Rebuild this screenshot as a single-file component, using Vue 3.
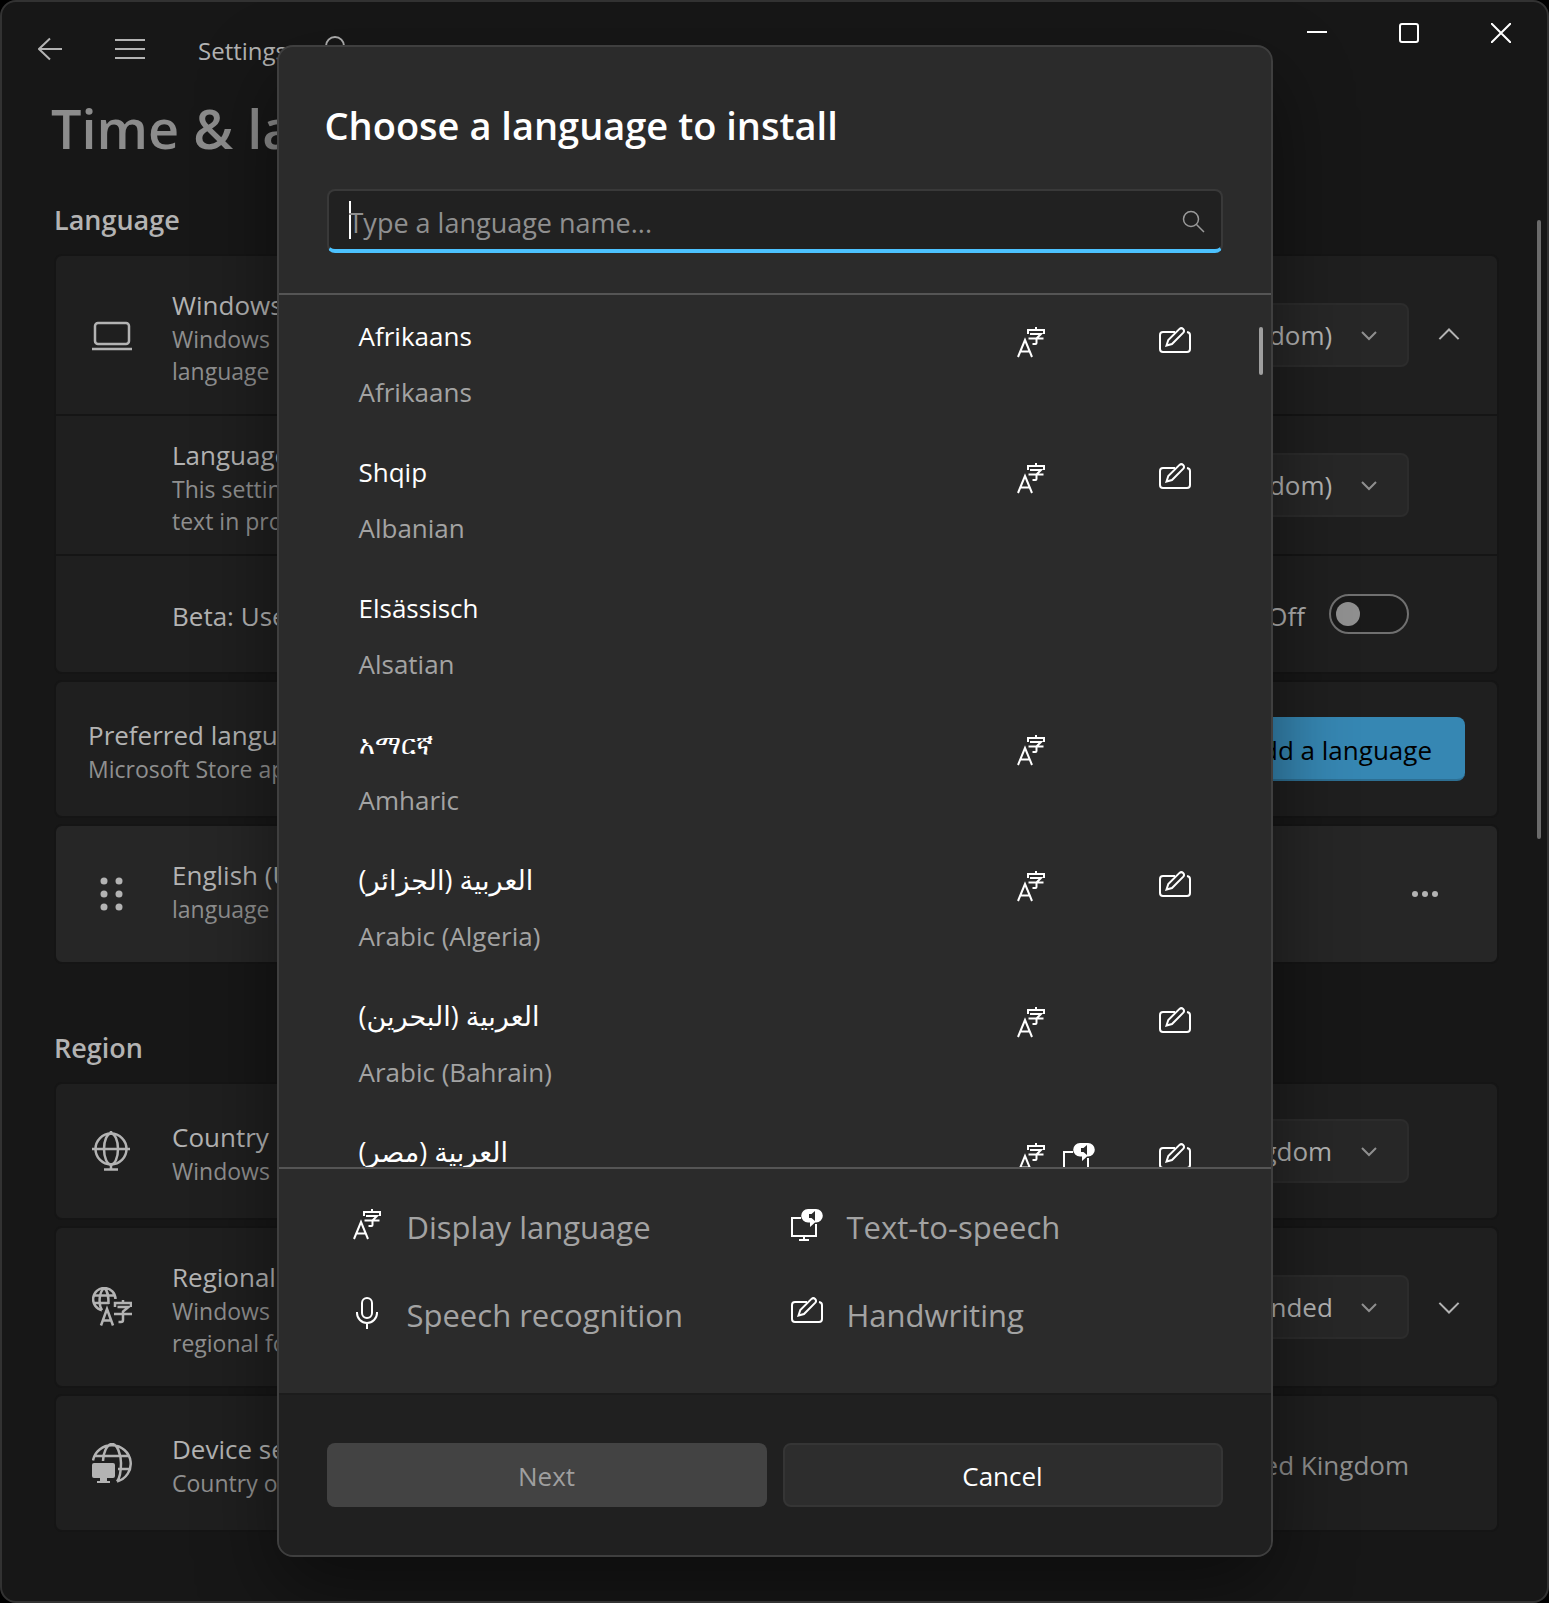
<script setup>
import { ref } from 'vue'

const query = ref('')
const displayLanguage = ref('English (United Kingdom)')
const localeLanguage = ref('English (United Kingdom)')
const country = ref('United Kingdom')
const format = ref('Recommended')
const utf8Beta = ref(false)

const featureOrder = ['display', 'tts', 'speech', 'ink']

const languages = [
  { native: 'Afrikaans', name: 'Afrikaans', features: ['display', 'ink'] },
  { native: 'Shqip', name: 'Albanian', features: ['display', 'ink'] },
  { native: 'Elsässisch', name: 'Alsatian', features: [] },
  { native: 'አማርኛ', name: 'Amharic', features: ['display'], wide: true },
  { native: 'العربية (الجزائر)', name: 'Arabic (Algeria)', features: ['display', 'ink'], rtl: true, wide: true },
  { native: 'العربية (البحرين)', name: 'Arabic (Bahrain)', features: ['display', 'ink'], rtl: true, wide: true },
  { native: 'العربية (مصر)', name: 'Arabic (Egypt)', features: ['display', 'tts', 'ink'], rtl: true, wide: true }
]

const legend = [
  { id: 'display', label: 'Display language' },
  { id: 'tts', label: 'Text-to-speech' },
  { id: 'speech', label: 'Speech recognition' },
  { id: 'ink', label: 'Handwriting' }
]
</script>

<template>
  <div class="window">
    <svg class="symbols" aria-hidden="true">
      <symbol id="f-display" viewBox="0 0 32 32">
        <path d="M3 30 10 13 17 30M5.5 24.5h9M21 0v3M13 7V3h16v4M15 7h11l-4.500 4.500V16q0 1-1 1h-3M13.500 11.500h15" />
      </symbol>
      <symbol id="f-tts" viewBox="0 0 32 32">
        <path d="M10 9H1v18h24V15M13 27v4M8 31h10" />
        <path class="solid" fill-rule="evenodd" d="M17 0h8a6.800 6.800 0 0 1 0 13.600h-1l-5 4.400v-4.400h-2A6.800 6.800 0 0 1 17 0zM18 5v4h2.500l3.500 3V2l-3.500 3z" />
      </symbol>
      <symbol id="f-speech" viewBox="0 0 32 32">
        <rect x="11" y="1" width="10" height="20" rx="5" />
        <path d="M6 15v1a10 10 0 0 0 20 0v-1M16 26v6" />
      </symbol>
      <symbol id="f-ink" viewBox="0 0 32 32">
        <path d="M16 5H4a3 3 0 0 0-3 3v14a3 3 0 0 0 3 3h24a3 3 0 0 0 3-3V8q0-2.500-3-3" />
        <path d="M7.500 18.500l1.800-5.500L20.500 1.900a2.700 2.700 0 0 1 3.800 3.800L13 17z" />
      </symbol>
      <symbol id="chev" viewBox="0 0 16 16"><path d="M1 5l7 7 7-7" /></symbol>
    </svg>

    <header class="titlebar">
      <nav class="nav">
        <button class="icon-btn" aria-label="Back">
          <svg width="24" height="24" viewBox="0 0 24 24"><path d="M1 12h23M12 1.500 1 12l11 10.500" /></svg>
        </button>
        <button class="icon-btn" aria-label="Menu">
          <svg width="30" height="24" viewBox="0 0 30 24"><path d="M0 3h30M0 12h30M0 21h30" /></svg>
        </button>
        <span class="app-name">Settings</span>
        <button class="icon-btn" aria-label="Find a setting">
          <svg width="28" height="28" viewBox="0 0 28 28"><circle cx="14" cy="11" r="9" /><path d="M8 18 1 26" /></svg>
        </button>
      </nav>
      <div class="controls">
        <button aria-label="Minimize"><svg width="20" height="20" viewBox="0 0 20 20"><path d="M0 9h20" /></svg></button>
        <button aria-label="Maximize"><svg width="20" height="20" viewBox="0 0 20 20"><rect x="1" y="1" width="18" height="18" rx="2" /></svg></button>
        <button aria-label="Close"><svg width="20" height="20" viewBox="0 0 20 20"><path d="M0 0l20 20M20 0 0 20" /></svg></button>
      </div>
    </header>

    <main class="page">
      <h1>Time &amp; language</h1>

      <section>
        <h2>Language</h2>
        <div class="card">
          <div class="row tall">
            <svg class="glyph" viewBox="0 0 40 40"><rect x="3" y="8" width="34" height="21" rx="3" /><path d="M0 34h40" /></svg>
            <div class="text">
              <label class="name" for="display-language">Windows UI</label>
              <span class="desc">Windows</span>
              <span class="desc">language</span>
            </div>
            <div class="dropdown">
              <select id="display-language" v-model="displayLanguage"><option>English (United Kingdom)</option></select>
              <svg><use href="#chev" /></svg>
            </div>
            <button class="expander up" aria-label="Collapse"><svg><use href="#chev" /></svg></button>
          </div>
          <div class="row sub">
            <div class="text">
              <label class="name" for="locale-language">Languages</label>
              <span class="desc">This setting is for</span>
              <span class="desc">text in programs</span>
            </div>
            <div class="dropdown">
              <select id="locale-language" v-model="localeLanguage"><option>English (United Kingdom)</option></select>
              <svg><use href="#chev" /></svg>
            </div>
          </div>
          <div class="row sub short">
            <div class="text">
              <label class="name" for="utf8">Beta: Use UTF-8</label>
            </div>
            <span class="state">Off</span>
            <input id="utf8" v-model="utf8Beta" class="toggle" type="checkbox" role="switch" />
          </div>
        </div>

        <div class="card">
          <div class="row flush">
            <div class="text">
              <span class="name">Preferred languages</span>
              <span class="desc">Microsoft Store apps</span>
            </div>
            <button class="accent">Add a language</button>
          </div>
        </div>

        <div class="card raised">
          <div class="row item">
            <svg class="glyph dots" viewBox="0 0 40 40">
              <circle cx="12" cy="7" r="3.500" /><circle cx="27" cy="7" r="3.500" />
              <circle cx="12" cy="20" r="3.500" /><circle cx="27" cy="20" r="3.500" />
              <circle cx="12" cy="33" r="3.500" /><circle cx="27" cy="33" r="3.500" />
            </svg>
            <div class="text">
              <span class="name">English (UK)</span>
              <span class="desc">language pack</span>
            </div>
            <button class="more" aria-label="More options">
              <svg width="28" height="8" viewBox="0 0 28 8"><circle cx="4" cy="4" r="3" /><circle cx="14" cy="4" r="3" /><circle cx="24" cy="4" r="3" /></svg>
            </button>
          </div>
        </div>
      </section>

      <section class="region">
        <h2>Region</h2>
        <div class="card">
          <div class="row">
            <svg class="glyph" viewBox="0 0 40 40">
              <circle cx="19" cy="18" r="15.500" /><ellipse cx="19" cy="18" rx="7" ry="15.500" /><path d="M0 18h38M19 0v3M19 33v5M12 38.500h14" />
            </svg>
            <div class="text">
              <label class="name" for="country">Country</label>
              <span class="desc">Windows</span>
            </div>
            <div class="dropdown">
              <select id="country" v-model="country"><option>United Kingdom</option></select>
              <svg><use href="#chev" /></svg>
            </div>
          </div>
        </div>

        <div class="card">
          <div class="row tall">
            <svg class="glyph" viewBox="0 0 40 40">
              <path d="M10 23.200A11.200 11.200 0 1 1 23.500 12M1 8.500h22M1 16h16M10 23.200C6.500 18 6.500 5 12.300 1 16 4 16.500 9 16.500 17" />
              <path d="M9 38.500 15 22l6 16.500M11 33.500h8M31 13v3M23 20v-4h16v4M25.500 20h11l-5.500 4.500V33q0 2-2 2h-2.500M22 27h18" />
            </svg>
            <div class="text">
              <label class="name" for="format">Regional format</label>
              <span class="desc">Windows</span>
              <span class="desc">regional format</span>
            </div>
            <div class="dropdown">
              <select id="format" v-model="format"><option>Recommended</option></select>
              <svg><use href="#chev" /></svg>
            </div>
            <button class="expander" aria-label="Expand"><svg><use href="#chev" /></svg></button>
          </div>
        </div>

        <div class="card">
          <div class="row">
            <svg class="glyph" viewBox="0 0 40 40">
              <path d="M1 17.500A19 18.500 0 1 1 25 38.500M2 13h36M11 18C11 10 15 1 20 1s9 10 9 19-2 16-4 18.500M26 26h12" />
              <path class="solid" d="M2 20h19q2 0 2 2v11q0 2-2 2h-6v3h3v2H5v-2h3v-3H2q-2 0-2-2V22q0-2 2-2z" />
            </svg>
            <div class="text">
              <span class="name">Device setup</span>
              <span class="desc">Country or region</span>
            </div>
            <span class="value">United Kingdom</span>
          </div>
        </div>
      </section>
    </main>
    <div class="page-thumb"></div>

    <div class="overlay">
      <div class="dialog" role="dialog" aria-modal="true" aria-labelledby="dialog-title">
        <div class="dialog-head">
          <h2 id="dialog-title">Choose a language to install</h2>
          <div class="search">
            <span class="caret"></span>
            <input v-model="query" type="text" placeholder="Type a language name..." aria-label="Type a language name" />
            <svg width="24" height="24" viewBox="0 0 24 24"><circle cx="10" cy="9" r="7.500" /><path d="M15.500 14.500 23 22" /></svg>
          </div>
        </div>

        <div class="list-wrap">
          <ul class="list">
            <li v-for="lang in languages" :key="lang.name">
              <div class="labels">
                <span class="native" :class="{ wide: lang.wide }" :dir="lang.rtl ? 'rtl' : 'ltr'">{{ lang.native }}</span>
                <span class="english">{{ lang.name }}</span>
              </div>
              <div class="features">
                <span v-for="f in featureOrder" :key="f" class="cell">
                  <svg v-if="lang.features.includes(f)" class="feature"><use :href="'#f-' + f" /></svg>
                </span>
              </div>
            </li>
          </ul>
          <div class="list-thumb"></div>
        </div>

        <ul class="legend">
          <li v-for="entry in legend" :key="entry.id">
            <svg class="feature"><use :href="'#f-' + entry.id" /></svg>
            <span>{{ entry.label }}</span>
          </li>
        </ul>

        <footer class="actions">
          <button class="next" disabled>Next</button>
          <button class="cancel">Cancel</button>
        </footer>
      </div>
    </div>
  </div>
</template>

<style>
html,
body {
  background: #000;
}
</style>

<style scoped>
* {
  box-sizing: border-box;
}

.window {
  position: relative;
  min-height: 100vh;
  border: 2px solid #323232;
  border-radius: 16px;
  background: #171717;
  color: #b3b3b3;
  font-family: "Open Sans", "Noto Sans", "DejaVu Sans", sans-serif;
  font-size: 26px;
  overflow: hidden;
}

.symbols {
  position: absolute;
  width: 0;
  height: 0;
}

svg {
  display: block;
  flex: none;
  fill: none;
  stroke: currentColor;
  stroke-width: 2;
}

.solid {
  fill: currentColor;
  stroke: none;
}

button,
select,
input {
  margin: 0;
  padding: 0;
  border: 0;
  background: none;
  color: inherit;
  font: inherit;
}

h1,
h2,
ul {
  margin: 0;
  padding: 0;
  list-style: none;
}

.titlebar {
  display: flex;
  justify-content: space-between;
  align-items: flex-start;
  height: 90px;
}

.nav {
  display: flex;
  align-items: center;
  padding: 15px 0 0 8px;
}

.icon-btn {
  display: flex;
  justify-content: center;
  align-items: center;
  width: 80px;
  height: 64px;
}

.app-name {
  width: 97px;
  margin-left: 28px;
  padding-top: 3px;
  font-size: 24px;
  line-height: 32px;
}

.controls {
  display: flex;
  color: #fff;
}

.controls button {
  display: flex;
  justify-content: center;
  align-items: center;
  width: 92px;
  height: 62px;
}

.page {
  padding: 0 48px 69px 50px;
}

h1 {
  color: #8c8c8c;
  font-size: 54px;
  font-weight: 600;
  line-height: 72px;
  margin-left: -1px;
}

h2 {
  font-size: 27px;
  font-weight: 600;
  line-height: 40px;
}

.page section {
  display: flex;
  flex-direction: column;
  gap: 6px;
  padding-top: 36px;
}

.page h2 {
  margin: 0 0 8px 2px;
}

.page .region {
  padding-top: 64px;
}

.card {
  margin-left: 2px;
  border: 2px solid #151515;
  border-radius: 8px;
  background: #1f1f1f;
}

.raised {
  background: #262626;
}

.row {
  display: flex;
  align-items: center;
  min-height: 134px;
  padding: 0 88px 0 36px;
}

.row + .row {
  border-top: 2px solid #151515;
}

.tall {
  min-height: 158px;
  padding-right: 24px;
}

.sub {
  min-height: 140px;
  padding-left: 116px;
}

.short {
  min-height: 118px;
}

.flush {
  padding-right: 32px;
  padding-left: 32px;
}

.item {
  min-height: 136px;
  padding-right: 48px;
}

.glyph {
  width: 40px;
  height: 40px;
  margin-right: 40px;
  stroke-width: 2.5;
}

.dots,
.more svg {
  fill: currentColor;
  stroke: none;
}

.text {
  display: flex;
  flex: 1;
  flex-direction: column;
  min-width: 0;
  padding-top: 4px;
  white-space: nowrap;
}

.item .text {
  padding: 0 0 6px;
}

.name {
  line-height: 36px;
}

.desc {
  color: #8f8f8f;
  font-size: 23px;
  line-height: 32px;
}

.dropdown {
  position: relative;
}

.dropdown select {
  display: block;
  height: 64px;
  padding: 0 74px 0 24px;
  appearance: none;
  border: 2px solid #2c2c2c;
  border-radius: 8px;
  background: #272727;
}

.dropdown svg {
  position: absolute;
  top: 24px;
  right: 32px;
  width: 16px;
  height: 16px;
  color: #8f8f8f;
  pointer-events: none;
}

.expander {
  display: flex;
  justify-content: center;
  align-items: center;
  width: 48px;
  height: 48px;
  margin-left: 16px;
}

.expander svg {
  width: 22px;
  height: 22px;
  stroke-width: 1.5;
}

.up svg {
  transform: rotate(180deg);
}

.toggle {
  display: flex;
  align-items: center;
  width: 80px;
  height: 40px;
  margin-left: 24px;
  padding-left: 5px;
  appearance: none;
  border: 2px solid #707070;
  border-radius: 20px;
  background: #1a1a1a;
}

.toggle::before {
  width: 24px;
  height: 24px;
  border-radius: 50%;
  background: #909090;
  content: "";
}

.toggle:checked {
  justify-content: flex-end;
  padding-right: 5px;
}

.state {
  padding-top: 4px;
}

.value {
  padding-top: 4px;
  color: #8f8f8f;
}

.accent {
  height: 64px;
  padding: 4px 33px 0;
  border-radius: 8px;
  border-bottom: 2px solid #2d6f93;
  background: #3687b3;
  color: #000;
}

.more {
  display: flex;
  justify-content: center;
  align-items: center;
  width: 48px;
  height: 48px;
}

.page-thumb {
  position: absolute;
  top: 218px;
  right: 6px;
  width: 4px;
  height: 619px;
  border-radius: 2px;
  background: #6b6b6b;
}

.overlay {
  position: absolute;
  inset: -2px;
  display: flex;
  justify-content: center;
  align-items: center;
  padding: 45px 24px 46px;
  pointer-events: none;
}

.dialog {
  display: flex;
  flex-direction: column;
  width: 996px;
  max-height: 100%;
  border: 2px solid #3f3f3f;
  border-radius: 16px;
  background: #2b2b2b;
  box-shadow: 0 32px 80px rgba(0, 0, 0, 0.45);
  color: #fff;
  overflow: hidden;
  pointer-events: auto;
}

.dialog-head {
  padding: 52px 48px 40px;
  border-bottom: 2px solid #555;
}

.dialog-head h2 {
  margin: 0 -2px 38px;
  font-size: 38px;
  line-height: 52px;
}

.search {
  display: flex;
  align-items: center;
  height: 64px;
  padding: 4px 16px 0 20px;
  border: 2px solid #393939;
  border-bottom: 4px solid #4cc2ff;
  border-radius: 8px;
  background: #212121;
}

.search input {
  flex: 1;
  min-width: 0;
  height: 40px;
  outline: 0;
  font-size: 27px;
}

.search input::placeholder {
  color: #8f8f8f;
  opacity: 1;
}

.search svg {
  color: #9a9a9a;
  stroke-width: 1.5;
}

.caret {
  width: 2px;
  height: 38px;
  margin: 0 -2px 4px 0;
  background: #fff;
}

.list-wrap {
  position: relative;
  display: flex;
  flex: 1;
  min-height: 0;
}

.list {
  flex: 1;
  padding: 0 80px;
  overflow-y: auto;
  scrollbar-width: none;
}

.list li {
  display: flex;
  justify-content: space-between;
  align-items: flex-start;
  padding: 21px 0 19px;
}

.labels {
  display: flex;
  flex-direction: column;
  align-items: flex-start;
  gap: 16px;
  line-height: 40px;
}

.native {
  height: 40px;
}

.wide {
  font-size: 27px;
}

.english {
  color: #a3a3a3;
}

.features {
  display: flex;
  gap: 16px;
  padding-top: 11px;
}

.cell,
.feature {
  width: 32px;
  height: 32px;
}

.list-thumb {
  position: absolute;
  top: 32px;
  right: 8px;
  width: 4px;
  height: 48px;
  border-radius: 2px;
  background: #9f9f9f;
}

.legend {
  display: grid;
  grid-template-columns: 1fr 1fr;
  gap: 52px 0;
  padding: 40px 40px 60px 72px;
  border-top: 2px solid #555;
  color: #a3a3a3;
  font-size: 31px;
  line-height: 36px;
}

.legend li {
  display: flex;
  gap: 24px;
}

.legend .feature {
  color: #fff;
}

.actions {
  display: grid;
  grid-template-columns: 1fr 1fr;
  gap: 16px;
  padding: 48px;
  border-top: 2px solid #1c1c1c;
  background: #202020;
}

.actions button {
  height: 64px;
  padding-top: 2px;
  border-radius: 8px;
}

.next {
  background: #434343;
  color: #9f9f9f;
}

.cancel {
  border: 2px solid #353535;
  background: #2d2d2d;
}
</style>
